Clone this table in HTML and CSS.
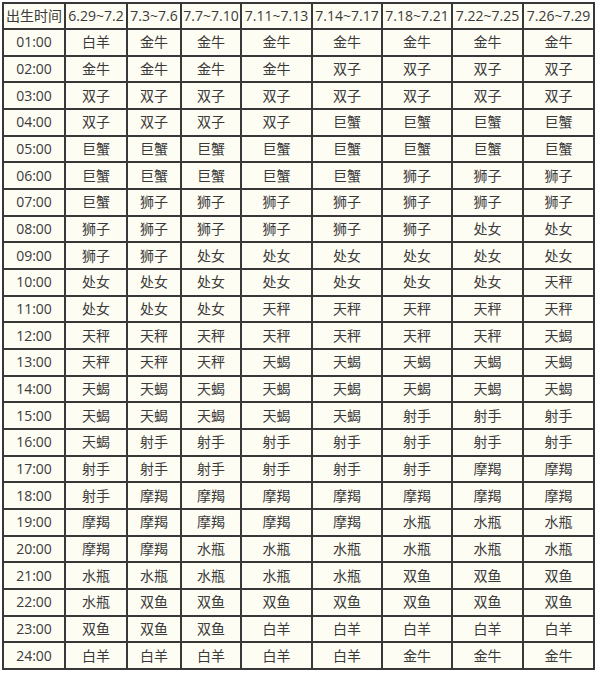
FILE: index.html
```html
<!DOCTYPE html>
<html lang="zh-CN">
<head>
<meta charset="utf-8">
<title>出生时间星座表</title>
<link rel="stylesheet" href="styles.css">
</head>
<body>
<div class="table">
<div class="cell">出生时间</div><div class="cell">6.29~7.2</div><div class="cell">7.3~7.6</div><div class="cell">7.7~7.10</div><div class="cell">7.11~7.13</div><div class="cell">7.14~7.17</div><div class="cell">7.18~7.21</div><div class="cell">7.22~7.25</div><div class="cell">7.26~7.29</div>
<div class="cell">01:00</div><div class="cell">白羊</div><div class="cell">金牛</div><div class="cell">金牛</div><div class="cell">金牛</div><div class="cell">金牛</div><div class="cell">金牛</div><div class="cell">金牛</div><div class="cell">金牛</div>
<div class="cell">02:00</div><div class="cell">金牛</div><div class="cell">金牛</div><div class="cell">金牛</div><div class="cell">金牛</div><div class="cell">双子</div><div class="cell">双子</div><div class="cell">双子</div><div class="cell">双子</div>
<div class="cell">03:00</div><div class="cell">双子</div><div class="cell">双子</div><div class="cell">双子</div><div class="cell">双子</div><div class="cell">双子</div><div class="cell">双子</div><div class="cell">双子</div><div class="cell">双子</div>
<div class="cell">04:00</div><div class="cell">双子</div><div class="cell">双子</div><div class="cell">双子</div><div class="cell">双子</div><div class="cell">巨蟹</div><div class="cell">巨蟹</div><div class="cell">巨蟹</div><div class="cell">巨蟹</div>
<div class="cell">05:00</div><div class="cell">巨蟹</div><div class="cell">巨蟹</div><div class="cell">巨蟹</div><div class="cell">巨蟹</div><div class="cell">巨蟹</div><div class="cell">巨蟹</div><div class="cell">巨蟹</div><div class="cell">巨蟹</div>
<div class="cell">06:00</div><div class="cell">巨蟹</div><div class="cell">巨蟹</div><div class="cell">巨蟹</div><div class="cell">巨蟹</div><div class="cell">巨蟹</div><div class="cell">狮子</div><div class="cell">狮子</div><div class="cell">狮子</div>
<div class="cell">07:00</div><div class="cell">巨蟹</div><div class="cell">狮子</div><div class="cell">狮子</div><div class="cell">狮子</div><div class="cell">狮子</div><div class="cell">狮子</div><div class="cell">狮子</div><div class="cell">狮子</div>
<div class="cell">08:00</div><div class="cell">狮子</div><div class="cell">狮子</div><div class="cell">狮子</div><div class="cell">狮子</div><div class="cell">狮子</div><div class="cell">狮子</div><div class="cell">处女</div><div class="cell">处女</div>
<div class="cell">09:00</div><div class="cell">狮子</div><div class="cell">狮子</div><div class="cell">处女</div><div class="cell">处女</div><div class="cell">处女</div><div class="cell">处女</div><div class="cell">处女</div><div class="cell">处女</div>
<div class="cell">10:00</div><div class="cell">处女</div><div class="cell">处女</div><div class="cell">处女</div><div class="cell">处女</div><div class="cell">处女</div><div class="cell">处女</div><div class="cell">处女</div><div class="cell">天秤</div>
<div class="cell">11:00</div><div class="cell">处女</div><div class="cell">处女</div><div class="cell">处女</div><div class="cell">天秤</div><div class="cell">天秤</div><div class="cell">天秤</div><div class="cell">天秤</div><div class="cell">天秤</div>
<div class="cell">12:00</div><div class="cell">天秤</div><div class="cell">天秤</div><div class="cell">天秤</div><div class="cell">天秤</div><div class="cell">天秤</div><div class="cell">天秤</div><div class="cell">天秤</div><div class="cell">天蝎</div>
<div class="cell">13:00</div><div class="cell">天秤</div><div class="cell">天秤</div><div class="cell">天秤</div><div class="cell">天蝎</div><div class="cell">天蝎</div><div class="cell">天蝎</div><div class="cell">天蝎</div><div class="cell">天蝎</div>
<div class="cell">14:00</div><div class="cell">天蝎</div><div class="cell">天蝎</div><div class="cell">天蝎</div><div class="cell">天蝎</div><div class="cell">天蝎</div><div class="cell">天蝎</div><div class="cell">天蝎</div><div class="cell">天蝎</div>
<div class="cell">15:00</div><div class="cell">天蝎</div><div class="cell">天蝎</div><div class="cell">天蝎</div><div class="cell">天蝎</div><div class="cell">天蝎</div><div class="cell">射手</div><div class="cell">射手</div><div class="cell">射手</div>
<div class="cell">16:00</div><div class="cell">天蝎</div><div class="cell">射手</div><div class="cell">射手</div><div class="cell">射手</div><div class="cell">射手</div><div class="cell">射手</div><div class="cell">射手</div><div class="cell">射手</div>
<div class="cell">17:00</div><div class="cell">射手</div><div class="cell">射手</div><div class="cell">射手</div><div class="cell">射手</div><div class="cell">射手</div><div class="cell">射手</div><div class="cell">摩羯</div><div class="cell">摩羯</div>
<div class="cell">18:00</div><div class="cell">射手</div><div class="cell">摩羯</div><div class="cell">摩羯</div><div class="cell">摩羯</div><div class="cell">摩羯</div><div class="cell">摩羯</div><div class="cell">摩羯</div><div class="cell">摩羯</div>
<div class="cell">19:00</div><div class="cell">摩羯</div><div class="cell">摩羯</div><div class="cell">摩羯</div><div class="cell">摩羯</div><div class="cell">摩羯</div><div class="cell">水瓶</div><div class="cell">水瓶</div><div class="cell">水瓶</div>
<div class="cell">20:00</div><div class="cell">摩羯</div><div class="cell">摩羯</div><div class="cell">水瓶</div><div class="cell">水瓶</div><div class="cell">水瓶</div><div class="cell">水瓶</div><div class="cell">水瓶</div><div class="cell">水瓶</div>
<div class="cell">21:00</div><div class="cell">水瓶</div><div class="cell">水瓶</div><div class="cell">水瓶</div><div class="cell">水瓶</div><div class="cell">水瓶</div><div class="cell">双鱼</div><div class="cell">双鱼</div><div class="cell">双鱼</div>
<div class="cell">22:00</div><div class="cell">水瓶</div><div class="cell">双鱼</div><div class="cell">双鱼</div><div class="cell">双鱼</div><div class="cell">双鱼</div><div class="cell">双鱼</div><div class="cell">双鱼</div><div class="cell">双鱼</div>
<div class="cell">23:00</div><div class="cell">双鱼</div><div class="cell">双鱼</div><div class="cell">双鱼</div><div class="cell">白羊</div><div class="cell">白羊</div><div class="cell">白羊</div><div class="cell">白羊</div><div class="cell">白羊</div>
<div class="cell">24:00</div><div class="cell">白羊</div><div class="cell">白羊</div><div class="cell">白羊</div><div class="cell">白羊</div><div class="cell">白羊</div><div class="cell">金牛</div><div class="cell">金牛</div><div class="cell">金牛</div>
</div>
</body>
</html>
```
FILE: styles.css
```css
html, body {
  margin: 0;
  padding: 0;
  background: #ffffff;
}
body {
  padding: 2px 0 0 2px;
  font-family: "Open Sans", "Noto Sans CJK SC", sans-serif;
  font-size: 14px;
  color: #3a3a3a;
}
.table {
  display: grid;
  grid-template-columns: 60px 60px 52px 58px 69px 68px 68px 69px 69px;
  grid-template-rows: 24px repeat(24, 1fr);
  gap: 2px;
  padding: 2px;
  width: 589px;
  height: 664px;
  background: #383838;
}
.cell {
  background: #fefdf4;
  display: flex;
  align-items: center;
  justify-content: center;
  white-space: nowrap;
  line-height: 1;
}
```
